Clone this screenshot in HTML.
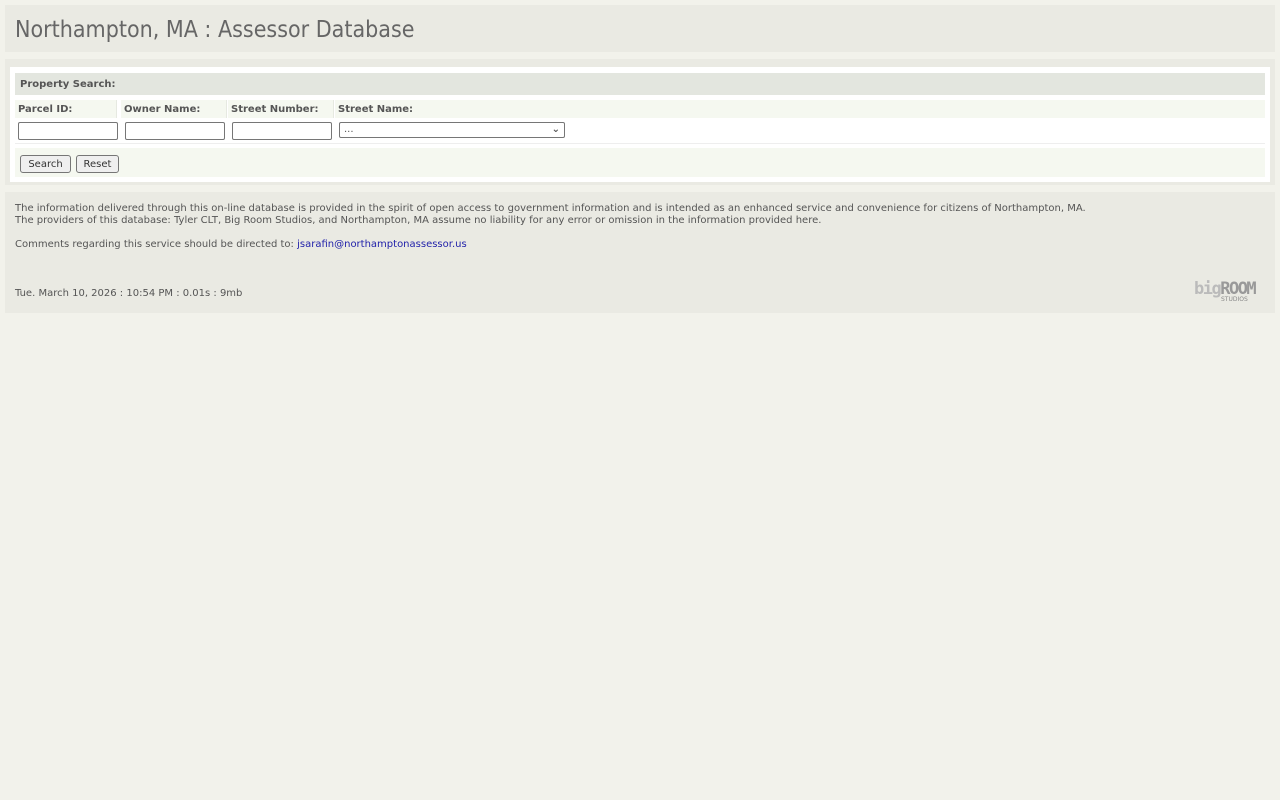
<!DOCTYPE html>
<html><head><style>
body{margin:0;background:#f2f2eb;font-family:"DejaVu Sans",Verdana,sans-serif;font-size:10px;color:#555;}
.hdr{position:absolute;left:5px;top:5px;width:1270px;height:47px;background:#eaeae3;}
.hdr h1{margin:0;position:absolute;left:10px;top:12px;font-family:"DejaVu Sans Condensed","DejaVu Sans",sans-serif;font-weight:normal;font-size:23px;line-height:26px;color:#666;}
.panel{position:absolute;left:5px;top:59px;width:1270px;height:126px;background:#eaeae3;}
.inner{position:absolute;left:5px;top:8px;width:1260px;height:115px;background:#fff;}
.bar{position:absolute;left:5px;top:6px;width:1250px;height:22px;background:#e3e6df;font-weight:bold;line-height:24px;}
.bar span{padding-left:5px}
.lab{position:absolute;top:33px;height:18px;background:#f5f8f0;font-weight:bold;line-height:20px;border-right:1px solid #e6e9e1}
.lab span{padding-left:3px}
.inp{position:absolute;top:55px;height:16px;width:98px;border:1px solid #767676;border-radius:2px;background:#fff}
.row2{position:absolute;left:5px;top:52px;width:1250px;height:24px;border-bottom:1px solid #eee}
.btns{position:absolute;left:5px;top:81px;width:1250px;height:29px;background:#f5f8f0;}
.btn{position:absolute;top:7px;height:16px;border:1px solid #767676;border-radius:3px;background:#efefef;font-size:10px;line-height:17px;text-align:center;color:#333}
.foot{position:absolute;left:5px;top:192px;width:1270px;height:121px;background:#eaeae3;}
.foot p{margin:0;position:absolute;left:10px;line-height:12px;white-space:nowrap}
a{color:#2222aa;text-decoration:none}
</style></head><body>
<div class="hdr"><h1>Northampton, MA : Assessor Database</h1></div>
<div class="panel"><div class="inner">
<div class="bar"><span>Property Search:</span></div>
<div class="lab" style="left:5px;width:101px"><span>Parcel ID:</span></div>
<div class="lab" style="left:111px;width:105px"><span>Owner Name:</span></div>
<div class="lab" style="left:218px;width:105px"><span>Street Number:</span></div>
<div class="lab" style="left:325px;width:930px;border:none"><span>Street Name:</span></div>
<div class="row2"></div>
<div class="inp" style="left:8px"></div>
<div class="inp" style="left:115px"></div>
<div class="inp" style="left:222px"></div>
<div class="inp" style="left:329px;width:224px;height:14px;top:55px;font-size:10px;line-height:14px;"><span style="padding-left:4px">...</span><span style="position:absolute;right:4px;top:0;font-weight:bold">&#8964;</span></div>
<div class="btns">
<div class="btn" style="left:5px;width:49px">Search</div>
<div class="btn" style="left:61px;width:41px">Reset</div>
</div>
</div></div>
<div class="foot">
<p style="top:11px">The information delivered through this on-line database is provided in the spirit of open access to government information and is intended as an enhanced service and convenience for citizens of Northampton, MA.</p>
<p style="top:23px">The providers of this database: Tyler CLT, Big Room Studios, and Northampton, MA assume no liability for any error or omission in the information provided here.</p>
<p style="top:47px">Comments regarding this service should be directed to: <a>jsarafin@northamptonassessor.us</a></p>
<p style="top:96px">Tue. March 10, 2026 : 10:54 PM : 0.01s : 9mb</p>
<div style="position:absolute;left:1189px;top:89px;width:72px;">
<div style="font:bold 17px/16px 'DejaVu Sans Mono',monospace;letter-spacing:-1.5px;"><span style="color:#bbb">big</span><span style="color:#999">ROOM</span></div>
<div style="font-size:6px;color:#888;margin-left:27px;line-height:6px">STUDIOS</div>
</div>
</div>
</body></html>
